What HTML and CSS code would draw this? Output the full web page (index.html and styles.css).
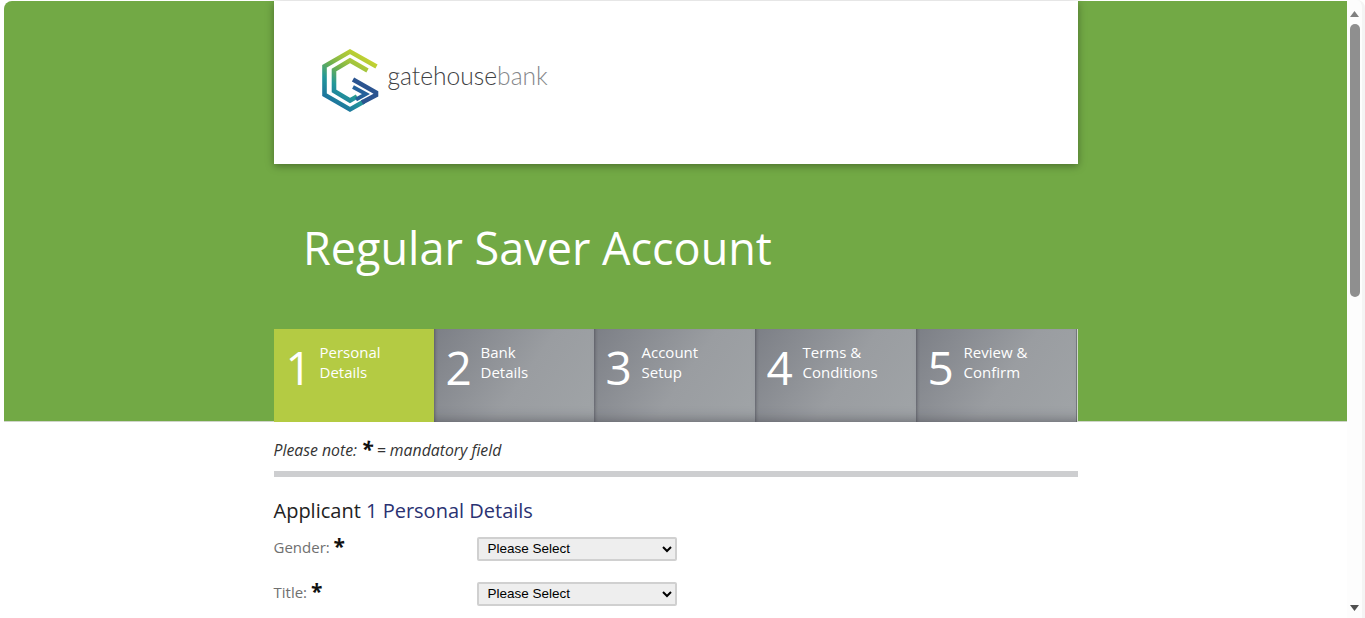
FILE: index.html
```html
<!DOCTYPE html>
<html lang="en">
<head>
<meta charset="utf-8">
<title>Regular Saver Account</title>
<link rel="stylesheet" href="styles.css">
</head>
<body>
<div class="page">
<header class="hero">
  <div class="wrap">
    <div class="brand">
      <svg class="mark" width="58" height="66" viewBox="321 47 58 66" fill="none" aria-hidden="true">
        <defs>
          <linearGradient id="hex" gradientUnits="userSpaceOnUse" x1="380" y1="55" x2="340" y2="112">
            <stop offset="0" stop-color="#dcdc28"/>
            <stop offset="0.35" stop-color="#9cc23f"/>
            <stop offset="0.5" stop-color="#6fb04e"/>
            <stop offset="0.72" stop-color="#22979a"/>
            <stop offset="1" stop-color="#1c6c9e"/>
          </linearGradient>
        </defs>
        <path d="M376.500 66.500L350 51.600L324.500 66.300V94.700L350 109.400L364 101.400" stroke="url(#hex)" stroke-width="4.600"/>
        <path d="M367.500 70.500L350 60.500L334 70V91L350 100.500L357 96.500" stroke="url(#hex)" stroke-width="4.600"/>
        <path d="M353 79.500L376 92.500V95L362 102.500" stroke="#2b5490" stroke-width="4.600"/>
        <path d="M353 87L366 94L356 99.500" stroke="#25609a" stroke-width="3.800"/>
      </svg>
      <span class="wordmark">gatehouse<span class="wordmark-light">bank</span></span>
    </div>
    <h1 class="title">Regular Saver Account</h1>
    <ol class="steps">
      <li class="step step-active"><span class="step-num">1</span><span class="step-label">Personal<br>Details</span></li>
      <li class="step"><span class="step-num">2</span><span class="step-label">Bank<br>Details</span></li>
      <li class="step"><span class="step-num">3</span><span class="step-label">Account<br>Setup</span></li>
      <li class="step"><span class="step-num">4</span><span class="step-label">Terms &amp;<br>Conditions</span></li>
      <li class="step"><span class="step-num">5</span><span class="step-label">Review &amp;<br>Confirm</span></li>
    </ol>
  </div>
</header>
<main class="wrap content">
  <p class="note">Please note: <span class="star star-note">*</span> = mandatory field</p>
  <hr class="rule">
  <h2 class="section"><span class="section-lead">Applicant</span> 1 Personal Details</h2>
  <div class="row">
    <label class="label" for="gender">Gender: <span class="star">*</span></label>
    <select id="gender" class="field"><option>Please Select</option></select>
  </div>
  <div class="row">
    <label class="label" for="title">Title: <span class="star">*</span></label>
    <select id="title" class="field"><option>Please Select</option></select>
  </div>
</main>
</div>
<div class="scrollbar" aria-hidden="true">
  <svg class="scroll-arrow" width="9" height="6" viewBox="0 0 9 6"><path d="M4.500 0L9 6H0z" fill="#808080"/></svg>
  <div class="scroll-thumb"></div>
  <svg class="scroll-arrow scroll-arrow-down" width="9" height="6" viewBox="0 0 9 6"><path d="M4.500 6L9 0H0z" fill="#505050"/></svg>
</div>
</body>
</html>
```
FILE: styles.css
```css
html {
  height: 100%;
  overflow: hidden;
  background: #fff;
}
body {
  display: flex;
  height: 100%;
  margin: 0;
  overflow: hidden;
  font-family: "Open Sans", "Liberation Sans", sans-serif;
  color: #666;
  background: #fff;
}
.page {
  flex: 1;
  min-width: 0;
  padding: 1px 0 0 4px;
  overflow: hidden;
}
.scrollbar {
  flex: 0 0 18px;
  display: flex;
  flex-direction: column;
  box-sizing: border-box;
  padding: 11px 2px 7px 3px;
  background: #fdfdfd;
  border-right: 3px solid #f4f4f4;
  border-radius: 0 8px 0 0;
}
.scroll-arrow {
  flex: none;
  display: block;
}
.scroll-thumb {
  flex: none;
  height: 273px;
  margin-top: 7px;
  background: #8f8f8f;
  border-radius: 5px;
}
.scroll-arrow-down {
  margin-top: auto;
}
.wrap {
  width: 804px;
  margin: 0 auto;
}
.hero {
  height: 420px;
  background: #72a945;
  border-radius: 8px 0 0 0;
  box-shadow: 0 1px 0 #cfd5c9;
}
.brand {
  display: flex;
  align-items: center;
  height: 163px;
  padding-left: 47px;
  box-sizing: border-box;
  background: #fff;
  box-shadow: 0 2px 8px rgba(0, 0, 0, .35);
}
.mark {
  flex: none;
  margin-top: -6px;
}
.wordmark {
  margin: -14px 0 0 9px;
  font-family: Lato, "Liberation Sans", sans-serif;
  font-weight: 300;
  font-size: 24.600px;
  color: #3f4244;
}
.wordmark-light {
  color: #85878a;
}
.title {
  margin: 0;
  padding: 56px 0 0 29.500px;
  height: 109px;
  font-size: 45px;
  line-height: 56px;
  font-weight: 400;
  color: #fff;
}
.steps {
  display: flex;
  margin: 0;
  padding: 0;
  list-style: none;
  width: 803px;
  height: 93px;
  border-right: 1px solid #cfd8c8;
  box-sizing: content-box;
}
.step {
  flex: 0 0 161px;
  display: flex;
  padding: 13px 0 0 12px;
  box-sizing: border-box;
  color: #fff;
  background: linear-gradient(125deg, #7c7f86 0%, #9a9da1 55%, #a0a4a7 100%);
  box-shadow: inset 3px 0 3px -2px rgba(60, 60, 70, .5), inset 0 -12px 12px -10px rgba(60, 60, 70, .5);
}
.step:nth-child(-n+2) {
  flex-basis: 160px;
}
.step:last-child {
  box-shadow: inset 3px 0 3px -2px rgba(60, 60, 70, .5), inset 0 -12px 12px -10px rgba(60, 60, 70, .5), inset -1px 0 0 #75787e;
}
.step-active {
  background: #b4cb43;
  box-shadow: none;
}
.step-num {
  width: 36px;
  font-size: 46px;
  font-weight: 400;
  line-height: 50px;
}
.step:nth-child(2) .step-num {
  width: 35px;
}
.step-active .step-num {
  width: 34px;
}
.step-label {
  font-size: 15px;
  line-height: 20px;
}
.content {
  color: #666;
}
.note {
  margin: 0;
  padding-top: 17px;
  height: 33px;
  font-size: 15.800px;
  line-height: 24px;
  font-style: italic;
  color: #333;
}
.star {
  font-size: 21px;
  font-style: normal;
  font-weight: 700;
  line-height: 16px;
  color: #111;
  vertical-align: -1px;
}
.star-note {
  font-style: italic;
}
.rule {
  height: 6px;
  margin: 0;
  border: 0;
  background: #cdced0;
}
.section {
  margin: 0;
  padding-top: 20px;
  font-size: 20px;
  line-height: 27px;
  font-weight: 400;
  color: #2a3272;
}
.section-lead {
  color: #222;
}
.row {
  display: flex;
  align-items: flex-start;
  height: 45px;
}
.row:first-of-type {
  margin-top: 13px;
}
.label {
  flex: 0 0 203px;
  margin-top: -1px;
  font-size: 15px;
  line-height: 22px;
  color: #707070;
}
.field {
  width: 200px;
  height: 24px;
  padding: 0 0 2px 5px;
  border: 2px solid #d0d0d0;
  border-radius: 2px;
  background-color: #eee;
  color: #000;
  font-family: "Liberation Sans", Arial, sans-serif;
  font-size: 13.500px;
}
```
